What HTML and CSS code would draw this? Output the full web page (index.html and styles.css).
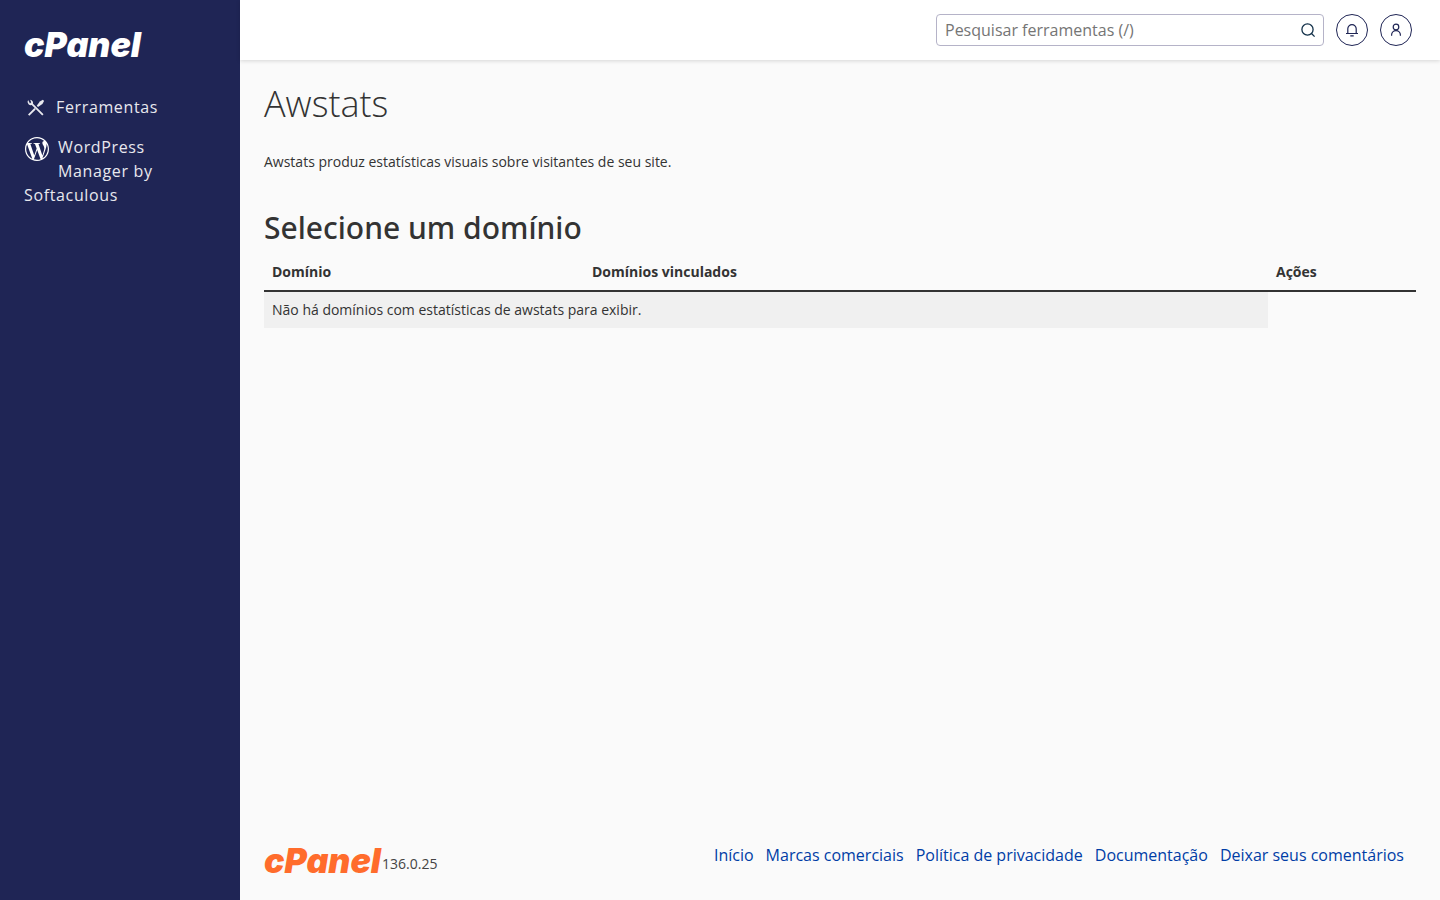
FILE: index.html
```html
<!DOCTYPE html>
<html lang="pt">
<head>
<meta charset="utf-8">
<title>Awstats</title>
<link rel="stylesheet" href="styles.css">
</head>
<body>
<div class="layout">
  <aside class="sidebar">
    <a class="brand" href="#" aria-label="cPanel">
      <svg class="logo" viewBox="0 0 118 26"><text x="0" y="25">cPanel</text></svg>
    </a>
    <nav class="side-nav">
      <a class="nav-link" href="#">
        <svg class="nav-icon tools-icon" viewBox="0 0 24 24" fill="none" stroke="currentColor">
          <path d="M3.400 3.300a3.600 3.600 0 0 0 5 5a3.600 3.600 0 0 0-2.800-5.300l1.200 2.700-1.400 1.300z" fill="currentColor" stroke="none"/>
          <path d="M7.500 7.500L19.500 19.500M4 19.800L11 12.800" stroke-width="2"/>
          <path d="M12.800 9.600L16.200 4.800L19.500 3L20.800 4.300L19 7.600L14.200 11z" fill="currentColor" stroke="none"/>
        </svg>Ferramentas</a>
      <a class="nav-link" href="#">
        <svg class="nav-icon wp-icon" viewBox="0 0 24 24" fill="currentColor"><path d="M21.469 6.825c.84 1.537 1.318 3.3 1.318 5.175 0 3.979-2.156 7.456-5.363 9.325l3.295-9.527c.615-1.54.82-2.771.82-3.864 0-.405-.026-.78-.07-1.11m-7.981.105c.647-.03 1.232-.105 1.232-.105.582-.075.514-.93-.067-.899 0 0-1.755.135-2.88.135-1.064 0-2.85-.15-2.85-.15-.585-.03-.661.855-.075.885 0 0 .54.061 1.125.09l1.68 4.605-2.37 7.08L5.354 6.9c.649-.03 1.234-.1 1.234-.1.585-.075.516-.93-.065-.896 0 0-1.746.138-2.874.138-.2 0-.438-.008-.69-.015C4.911 3.15 8.235 1.215 12 1.215c2.809 0 5.365 1.072 7.286 2.833-.046-.003-.091-.009-.141-.009-1.06 0-1.812.923-1.812 1.914 0 .89.513 1.643 1.06 2.531.411.72.89 1.643.89 2.977 0 .915-.354 1.994-.821 3.479l-1.075 3.585-3.9-11.61.001.014zM12 22.784c-1.059 0-2.081-.153-3.048-.437l3.237-9.406 3.315 9.087c.024.053.05.101.078.149-1.12.393-2.325.609-3.582.609M1.211 12c0-1.564.336-3.05.935-4.39L7.29 21.709C3.694 19.96 1.212 16.271 1.211 12M12 0C5.385 0 0 5.385 0 12s5.385 12 12 12 12-5.385 12-12S18.615 0 12 0"/></svg>WordPress Manager by Softaculous</a>
    </nav>
  </aside>
  <div class="content">
    <header class="topbar">
      <form class="search" role="search">
        <input class="search-input" type="text" placeholder="Pesquisar ferramentas (/)" aria-label="Pesquisar ferramentas">
        <button class="search-button" type="button" aria-label="Pesquisar">
          <svg viewBox="0 0 16 16" fill="none" stroke="currentColor" stroke-width="1.300"><circle cx="7.500" cy="7.500" r="5.600"/><path d="M11.500 11.500L14.600 14.600"/></svg>
        </button>
      </form>
      <button class="round-button" type="button" aria-label="Notificações">
        <svg viewBox="0 0 16 16" fill="none" stroke="currentColor" stroke-width="1.200"><path d="M2 11.500H14M3.800 11.500V6.800a4.200 4.200 0 0 1 8.400 0V11.500M6.300 13.900H9.700"/></svg>
      </button>
      <button class="round-button" type="button" aria-label="Usuário">
        <svg viewBox="0 0 16 16" fill="none" stroke="currentColor" stroke-width="1.200"><circle cx="8" cy="5" r="2.800"/><path d="M3.600 13.800V13a4.400 4.400 0 0 1 8.800 0V13.800"/></svg>
      </button>
    </header>
    <main class="main">
      <h1 class="page-title">Awstats</h1>
      <p class="intro">Awstats produz estatísticas visuais sobre visitantes de seu site.</p>
      <h2 class="section-title">Selecione um domínio</h2>
      <table class="domains">
        <colgroup><col class="col-domain"><col><col class="col-actions"></colgroup>
        <thead><tr><th>Domínio</th><th>Domínios vinculados</th><th>Ações</th></tr></thead>
        <tbody><tr><td colspan="2">Não há domínios com estatísticas de awstats para exibir.</td></tr></tbody>
      </table>
    </main>
    <footer class="footer">
      <div class="product">
        <svg class="logo logo-orange" viewBox="0 0 118 26" role="img" aria-label="cPanel"><text x="0" y="25">cPanel</text></svg>
        <span class="version">136.0.25</span>
      </div>
      <nav class="footer-links">
        <a href="#">Início</a>
        <a href="#">Marcas comerciais</a>
        <a href="#">Política de privacidade</a>
        <a href="#">Documentação</a>
        <a href="#">Deixar seus comentários</a>
      </nav>
    </footer>
  </div>
</div>
</body>
</html>
```
FILE: styles.css
```css
* { box-sizing: border-box; }
body {
  margin: 0;
  font: 14px/20px "Open Sans", "Noto Sans", sans-serif;
  color: #333;
  background: #fafafa;
}
.layout { display: flex; min-height: 100vh; }
.sidebar {
  flex: 0 0 240px;
  padding: 32px 24px;
  background: #1f2555;
  color: #e8e8ee;
}
.brand { display: block; color: #fff; }
.logo {
  display: block;
  width: 118px;
  height: 26px;
  overflow: visible;
  fill: currentColor;
  font: italic 900 34px Inter, sans-serif;
}
.logo-orange { color: #ff6c2c; }
.side-nav { display: flex; flex-direction: column; gap: 16px; margin-top: 37px; }
.nav-link {
  display: block;
  font-size: 16px;
  line-height: 24px;
  letter-spacing: 0.04em;
  color: inherit;
  text-decoration: none;
}
.nav-icon { float: left; margin-right: 8px; }
.tools-icon { width: 24px; height: 22px; margin-top: 2px; }
.nav-link:first-child { height: 24px; }
.wp-icon { width: 26px; height: 26px; padding: 1px; margin-top: 1px; color: #fff; }
.content { flex: 1; min-width: 0; display: flex; flex-direction: column; }
.topbar {
  display: flex;
  justify-content: flex-end;
  align-items: center;
  gap: 12px;
  height: 60px;
  padding: 0 28px;
  background: #fff;
  box-shadow: 0 1px 4px rgba(0, 0, 0, 0.15);
}
.search {
  display: flex;
  width: 388px;
  height: 32px;
  border: 1px solid #b5b3c8;
  border-radius: 4px;
  background: #fff;
}
.search-input {
  flex: 1;
  min-width: 0;
  padding: 0 8px;
  border: 0;
  background: transparent;
  font: 16px/24px "Open Sans", sans-serif;
}
.search-input::placeholder { color: #757575; }
.search-button { width: 30px; padding: 0 7px; border: 0; background: transparent; color: #123049; }
.search-button svg { display: block; width: 16px; height: 16px; }
.round-button {
  display: grid;
  place-items: center;
  width: 32px;
  height: 32px;
  padding: 0;
  border: 1px solid #1f2555;
  border-radius: 50%;
  background: #fff;
  color: #1f2555;
}
.round-button svg { width: 16px; height: 16px; }
.main { flex: 1; padding: 22px 24px; }
.page-title { margin: 0; font-size: 36px; line-height: 44px; font-weight: 300; }
.intro { margin: 26px 0 0; }
.section-title { margin: 36px 0 0; font: 500 30px/40px "Noto Sans", sans-serif; }
.domains { width: 100%; margin-top: 6px; border-collapse: collapse; table-layout: fixed; }
.col-domain { width: 320px; }
.col-actions { width: 148px; }
.domains th, .domains td { padding: 8px; text-align: left; }
.domains th { border-bottom: 2px solid #333; font-weight: 700; }
.domains td { background: #f0f0f0; }
.footer { display: flex; justify-content: space-between; padding: 0 36px 26px 24px; }
.product { display: flex; align-items: flex-end; padding-top: 5px; }
.version { line-height: 20px; color: #444; }
.footer-links { display: flex; gap: 12px; font-size: 16px; line-height: 24px; }
.footer-links a { color: #003da6; text-decoration: none; }
```
